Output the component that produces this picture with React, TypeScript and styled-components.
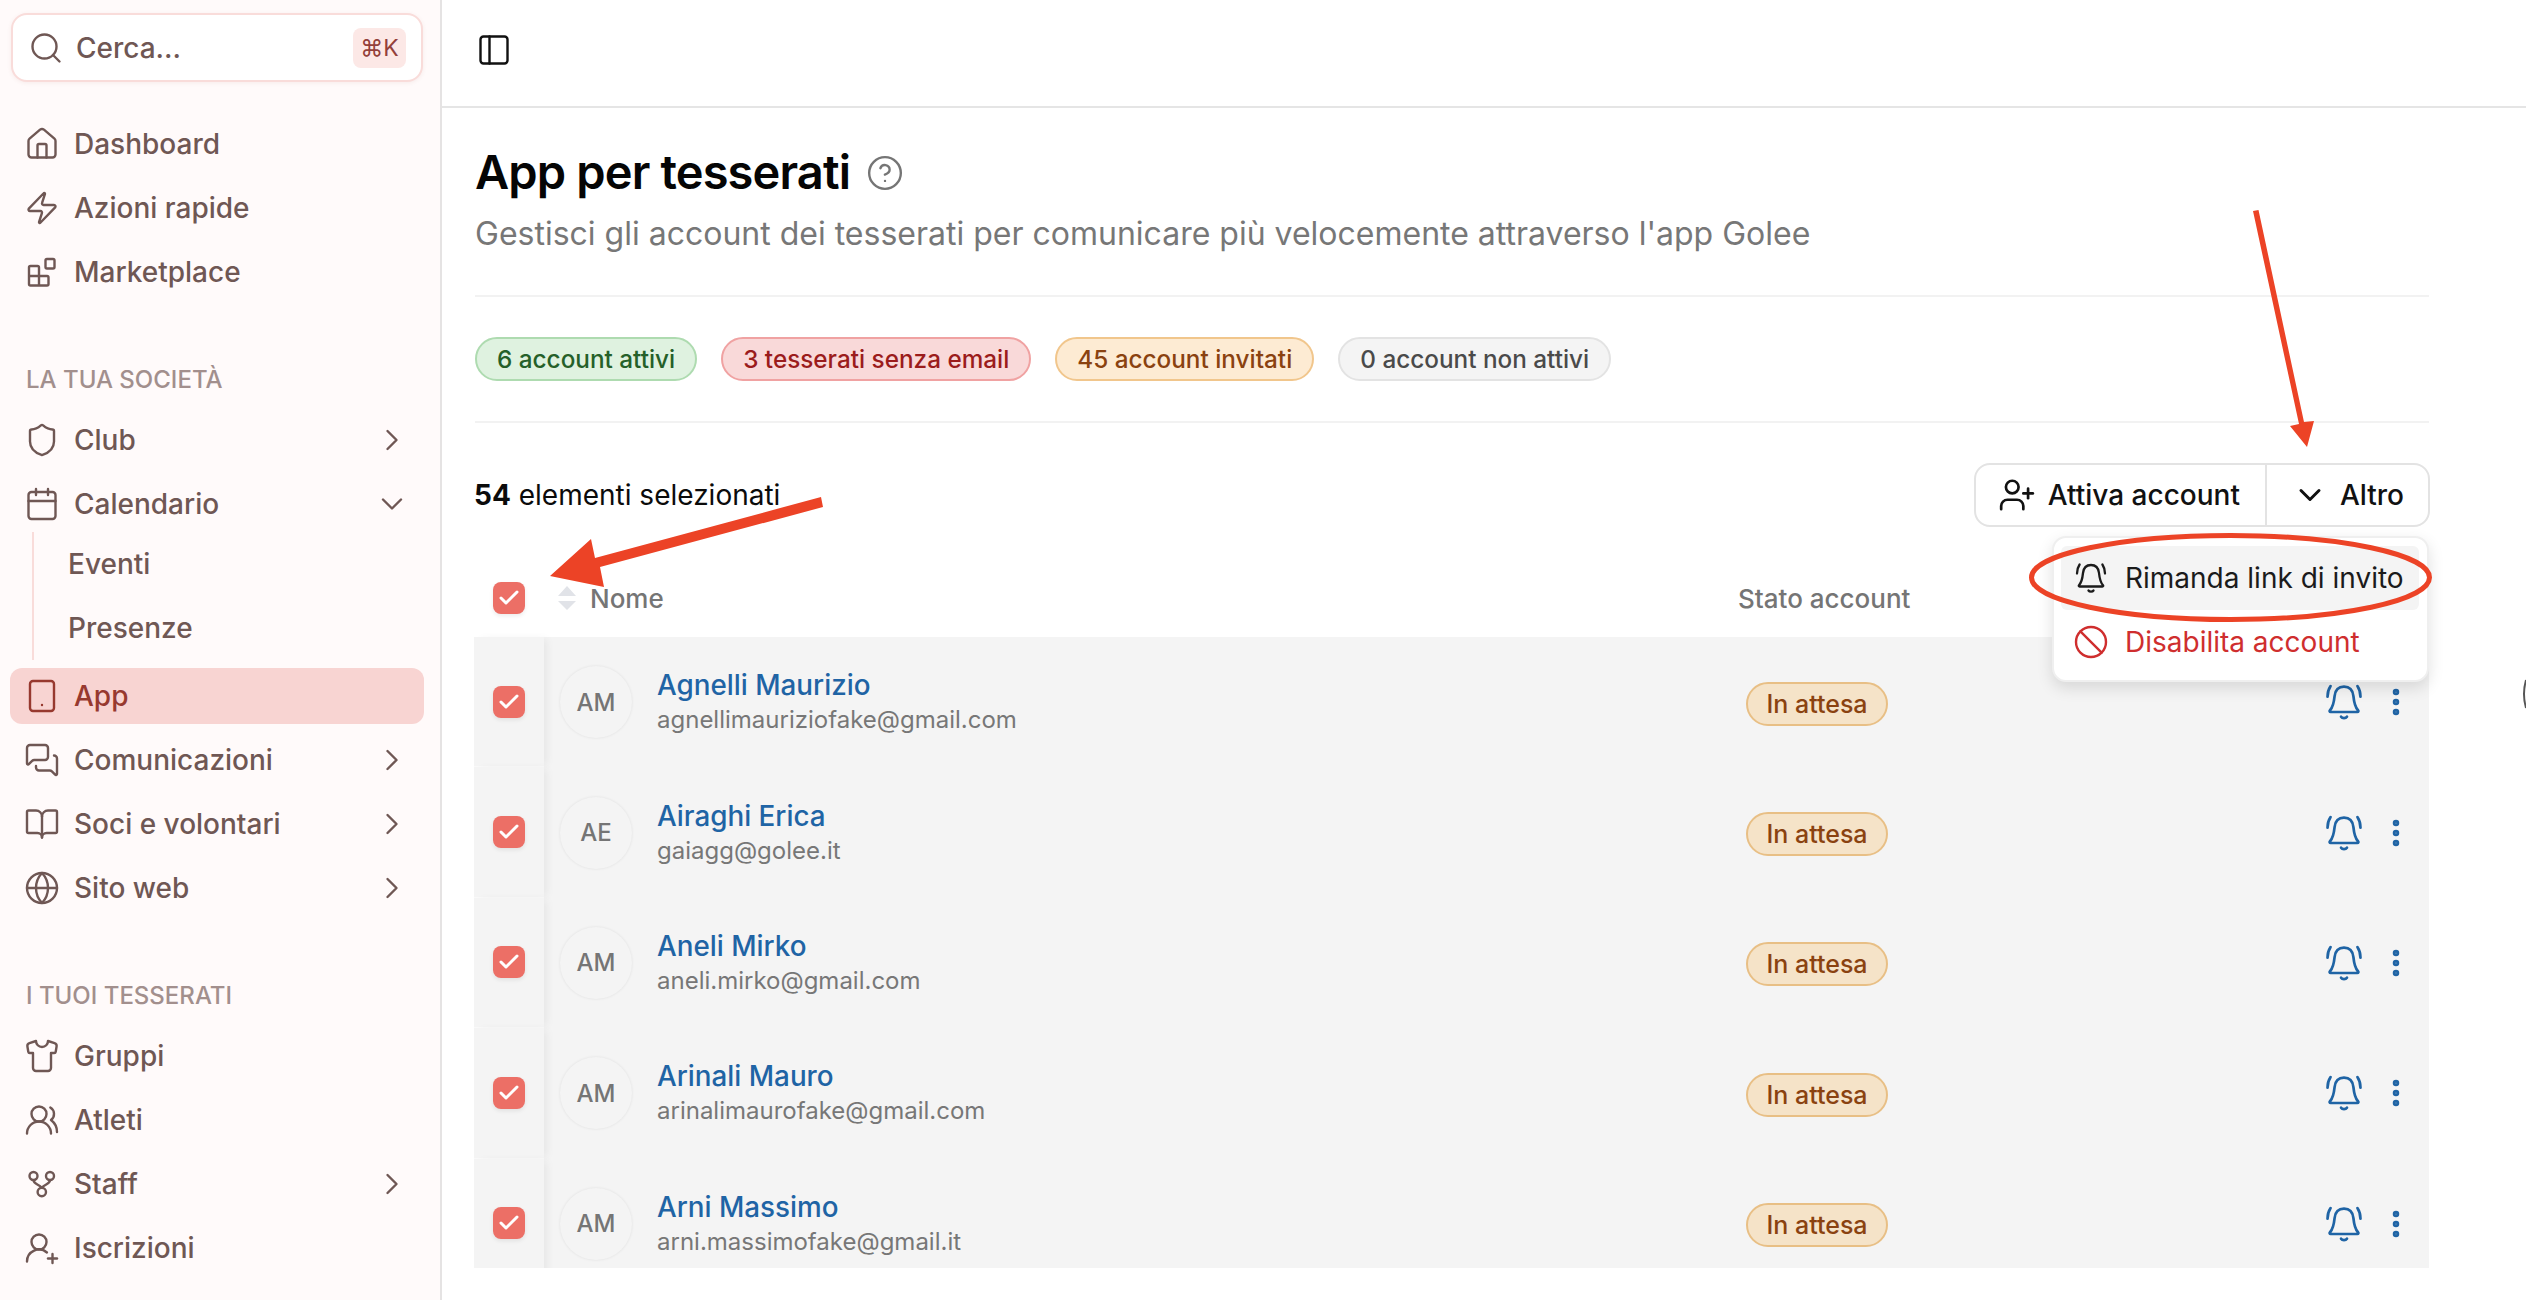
import React from "react";
import styled, { createGlobalStyle } from "styled-components";
import {
  Ban,
  BookOpen,
  Calendar,
  Check,
  ChevronDown,
  ChevronRight,
  CircleHelp,
  EllipsisVertical,
  Globe,
  House,
  LucideIcon,
  MessagesSquare,
  PanelLeft,
  Search,
  Shield,
  Shirt,
  Tablet,
  UserPlus,
  UserRoundPlus,
  UsersRound,
  Zap,
} from "lucide-react";

const GlobalStyle = createGlobalStyle`
  html, body {
    margin: 0;
    padding: 0;
    background: #fff;
    font-family: Inter, "Liberation Sans", sans-serif;
    overflow: hidden;
  }
  * { box-sizing: border-box; }
`;

const Page = styled.div`
  position: relative;
  display: flex;
  width: 2526px;
  height: 1300px;
  overflow: hidden;
`;

/* sidebar */
const Sidebar = styled.aside`
  flex: 0 0 442px;
  height: 100%;
  padding: 13px 16px 0 10px;
  background: #fffafa;
  border-right: 2px solid #e5e3e3;
  color: #6f5754;
`;

const SearchBox = styled.div`
  display: flex;
  align-items: center;
  height: 69px;
  margin: 0 0 34px 1px;
  width: 412px;
  padding: 0 15px 0 15px;
  gap: 12px;
  background: #fff;
  border: 2px solid #f9dcda;
  border-radius: 16px;
  box-shadow: 0 1px 4px rgba(150, 60, 50, 0.08);
  font-size: 28px;
  font-weight: 500;
`;

const SearchLabel = styled.span`
  flex: 1;
`;

const Kbd = styled.span`
  display: flex;
  align-items: center;
  justify-content: center;
  width: 53px;
  height: 40px;
  border-radius: 8px;
  background: #fce8e6;
  color: #93403a;
  font-size: 23px;
  font-weight: 400;
`;

const NavList = styled.nav`
  display: flex;
  flex-direction: column;
  gap: 8px;
`;

const NavRow = styled.div<{ $active?: boolean }>`
  display: flex;
  align-items: center;
  height: 56px;
  padding: 0 14px;
  gap: 14px;
  border-radius: 12px;
  font-size: 28px;
  font-weight: 500;
  background: ${(p) => (p.$active ? "#f8d4d2" : "transparent")};
  color: ${(p) => (p.$active ? "#97392f" : "#6f5754")};
`;

const NavText = styled.span`
  flex: 1;
`;

const SectionLabel = styled.div`
  height: 32px;
  margin: 56px 0 8px;
  padding-left: 16px;
  line-height: 32px;
  font-size: 24px;
  font-weight: 500;
  color: #a28f8d;
`;

const SubNav = styled.div`
  display: flex;
  flex-direction: column;
  gap: 8px;
  margin: -8px 0 0 22px;
  padding: 4px 0 4px 34px;
  border-left: 2px solid #f9dcda;
`;

const SubRow = styled.div`
  display: flex;
  align-items: center;
  height: 56px;
  font-size: 28px;
  font-weight: 500;
  color: #6f5754;
`;

/* main */
const Main = styled.main`
  flex: 1;
  min-width: 0;
  display: flex;
  flex-direction: column;
`;

const TopBar = styled.header`
  display: flex;
  align-items: center;
  flex: 0 0 108px;
  padding: 0 0 6px 34px;
  border-bottom: 2px solid #e5e5e5;
  color: #111;
`;

const Content = styled.div`
  padding: 36px 97px 0 33px;
`;

const TitleRow = styled.div`
  display: flex;
  align-items: center;
  gap: 16px;
  height: 56px;
`;

const Title = styled.h1`
  margin: 0;
  font-size: 47px;
  line-height: 56px;
  font-weight: 600;
  letter-spacing: -0.86px;
  color: #050505;
`;

const HelpIcon = styled.span`
  display: flex;
  color: #757575;
  margin-top: 2px;
`;

const Subtitle = styled.p`
  margin: 12px 0 0;
  font-size: 32px;
  line-height: 44px;
  font-weight: 400;
  color: #777;
`;

const Divider = styled.div`
  height: 2px;
  background: #f2f2f2;
`;

const TopDivider = styled(Divider)`
  margin-top: 39px;
`;

const ChipRow = styled.div`
  display: flex;
  gap: 24px;
  margin: 40px 0;
`;

const tones = {
  green: { bg: "#dff2e0", line: "#aedbb0", fg: "#256029" },
  red: { bg: "#f9d9d9", line: "#f0a2a2", fg: "#9b1c1c" },
  orange: { bg: "#fdebd3", line: "#f1c68c", fg: "#8a4210" },
  grey: { bg: "#f4f4f4", line: "#e3e3e3", fg: "#4a4a4a" },
};

const Chip = styled.span<{ $tone: keyof typeof tones }>`
  display: flex;
  align-items: center;
  height: 44px;
  padding: 0 20px;
  border-radius: 22px;
  font-size: 24.3px;
  font-weight: 500;
  white-space: nowrap;
  background: ${(p) => tones[p.$tone].bg};
  border: 2px solid ${(p) => tones[p.$tone].line};
  color: ${(p) => tones[p.$tone].fg};
`;

const Toolbar = styled.div`
  display: flex;
  justify-content: space-between;
  align-items: center;
  margin-top: 40px;
  height: 64px;
`;

const Selection = styled.div`
  font-size: 28px;
  margin-left: -1px;
  color: #0b0b0b;
  b {
    font-weight: 700;
  }
`;

const ButtonGroup = styled.div`
  position: relative;
  display: flex;
  height: 64px;
  margin-right: -1px;
  border: 2px solid #e3e3e3;
  border-radius: 16px;
  background: #fff;
`;

const GroupButton = styled.div<{ $split?: boolean }>`
  display: flex;
  align-items: center;
  gap: 12px;
  padding: ${(p) => (p.$split ? "0 24px 0 25px" : "0 25px 0 22px")};
  font-size: 28px;
  font-weight: 500;
  color: #111;
  & + & {
    border-left: 2px solid #e3e3e3;
  }
`;

const Menu = styled.div`
  position: absolute;
  z-index: 2;
  top: 71px;
  right: -1px;
  width: 377px;
  height: 146px;
  padding: 8px 8px 8px 7px;
  background: #fff;
  border: 2px solid #efefef;
  border-radius: 14px;
  box-shadow: 0 6px 16px rgba(0, 0, 0, 0.12);
`;

const MenuItem = styled.div<{ $danger?: boolean; $hover?: boolean }>`
  display: flex;
  align-items: center;
  gap: 16px;
  height: 64px;
  padding-left: 12px;
  border-radius: 6px;
  font-size: 28px;
  font-weight: 400;
  color: ${(p) => (p.$danger ? "#cf2e2e" : "#1b1b1b")};
  background: ${(p) => (p.$hover ? "#f4f4f4" : "transparent")};
`;

const MenuBell = styled.span`
  display: flex;
  margin: 0 1px;
`;

const Table = styled.div`
  height: 741px;
  overflow: hidden;
  margin-left: -1px;
`;

const columns = "70px 1194px 1fr auto";

const HeadRow = styled.div`
  display: grid;
  grid-template-columns: ${columns};
  align-items: center;
  height: 110px;
  padding-top: 32px;
  font-size: 26px;
  font-weight: 500;
  color: #757575;
`;

const HeadName = styled.div`
  display: flex;
  align-items: center;
  gap: 14px;
  padding-left: 14px;
`;

const BodyRow = styled.div`
  display: grid;
  grid-template-columns: ${columns};
  align-items: center;
  height: 130.4px;
  background: #f4f4f4;
`;

const CheckCell = styled.div<{ $sticky?: boolean }>`
  display: flex;
  align-items: center;
  justify-content: center;
  height: 100%;
  ${(p) =>
    p.$sticky
      ? "box-shadow: 5px 0 8px -2px rgba(0, 0, 0, 0.06); border-bottom: 1px solid #f9f9f9; background: #f4f4f4;"
      : ""}
`;

const Checkbox = styled.span`
  display: flex;
  align-items: center;
  justify-content: center;
  width: 32px;
  height: 32px;
  border-radius: 8px;
  background: #ec6f66;
  color: #fff;
  box-shadow: 0 2px 4px rgba(0, 0, 0, 0.08);
`;

const Person = styled.div`
  display: flex;
  align-items: center;
  gap: 25px;
  padding-left: 16px;
`;

const Avatar = styled.div`
  display: flex;
  align-items: center;
  justify-content: center;
  width: 72px;
  height: 72px;
  border-radius: 50%;
  background: #f4f4f4;
  box-shadow: 0 0 3px rgba(0, 0, 0, 0.09);
  font-size: 24px;
  font-weight: 500;
  color: #757575;
`;

const PersonText = styled.div`
  display: flex;
  flex-direction: column;
`;

const PersonName = styled.div`
  font-size: 27.8px;
  line-height: 34px;
  margin-top: 1px;
  font-weight: 500;
  color: #1f64a5;
`;

const PersonMail = styled.div`
  font-size: 24px;
  line-height: 34px;
  margin-top: 1px;
  color: #777;
`;

const StatusChip = styled.span`
  display: inline-flex;
  align-items: center;
  justify-content: center;
  width: 142px;
  height: 44px;
  margin: 3px 0 0 8px;
  border-radius: 22px;
  background: #f5e3c8;
  border: 2px solid #e8bf85;
  color: #8a4210;
  font-size: 25px;
  font-weight: 500;
`;

const RowActions = styled.div`
  display: flex;
  align-items: center;
  gap: 15px;
  padding-right: 16px;
  color: #1f64a5;
`;

const Annotations = styled.svg`
  position: absolute;
  z-index: 5;
  left: 0;
  top: 0;
  pointer-events: none;
`;

const Icon = ({ of: Glyph, size = 36 }: { of: LucideIcon; size?: number }) => (
  <Glyph size={size} strokeWidth={1.6} style={{ flex: "none" }} />
);

const StaffIcon = () => (
  <svg width="36" height="36" viewBox="0 0 36 36" fill="none" stroke="currentColor" strokeWidth="2.4" style={{ flex: "none" }}>
    <circle cx="9.5" cy="10" r="4" />
    <circle cx="26" cy="10" r="4" />
    <circle cx="17.8" cy="26" r="4.2" />
    <path d="M9.5 14c0 4 5 4 8.3 7.8M26 14c0 4-5 4-8.2 7.8" />
  </svg>
);

const MarketIcon = () => (
  <svg width="36" height="36" viewBox="0 0 36 36" fill="none" stroke="currentColor" strokeWidth="2.4" strokeLinejoin="round" style={{ flex: "none" }}>
    <rect x="21.500" y="5" width="9" height="9.500" rx="1.500" />
    <path d="M5 13.500a1.500 1.500 0 0 1 1.500-1.500h7a1.500 1.500 0 0 1 1.500 1.500V22h8a1.500 1.500 0 0 1 1.500 1.500v6.500a1.500 1.500 0 0 1-1.500 1.500h-16.500a1.500 1.500 0 0 1-1.500-1.500zM5 22h10v9.500" />
  </svg>
);

const BellIcon = ({ size }: { size: number }) => (
  <svg width={size} height={size} viewBox="0 0 34 34" fill="none" stroke="currentColor" strokeWidth="2.3" strokeLinecap="round" strokeLinejoin="round" style={{ flex: "none" }}>
    <path d="M17 4c-5 0-7.500 3.500-8 8-.5 5-1 9-4 12.200-.5.6-.2 1.300.6 1.300h22.800c.8 0 1.100-.7.6-1.300-3-3.200-3.500-7.200-4-12.200-.5-4.500-3-8-8-8z" />
    <path d="M14.500 29.500c1 1.500 4 1.500 5 0" />
    <path d="M3 12.500c0-3.300.8-6.300 2.600-9M31 12.500c0-3.300-.8-6.300-2.600-9" />
  </svg>
);

const SortIcon = () => (
  <svg width="18" height="24" viewBox="0 0 18 24" fill="#e1e3e8" style={{ flex: "none" }}>
    <path d="M9 0l9 10H0zM9 24L0 15h18z" />
  </svg>
);

type NavEntry = { icon: React.ReactNode; label: string; arrow?: boolean };

const Entry = ({ icon, label, arrow }: NavEntry) => (
  <NavRow>
    {icon}
    <NavText>{label}</NavText>
    {arrow && <Icon of={ChevronRight} />}
  </NavRow>
);

const people = [
  { initials: "AM", name: "Agnelli Maurizio", mail: "agnellimauriziofake@gmail.com" },
  { initials: "AE", name: "Airaghi Erica", mail: "gaiagg@golee.it" },
  { initials: "AM", name: "Aneli Mirko", mail: "aneli.mirko@gmail.com" },
  { initials: "AM", name: "Arinali Mauro", mail: "arinalimaurofake@gmail.com" },
  { initials: "AM", name: "Arni Massimo", mail: "arni.massimofake@gmail.it" },
];

export default function App() {
  return (
    <Page>
      <GlobalStyle />
      <Sidebar>
        <SearchBox>
          <Icon of={Search} />
          <SearchLabel>Cerca...</SearchLabel>
          <Kbd>⌘K</Kbd>
        </SearchBox>

        <NavList>
          <Entry icon={<Icon of={House} />} label="Dashboard" />
          <Entry icon={<Icon of={Zap} />} label="Azioni rapide" />
          <Entry icon={<MarketIcon />} label="Marketplace" />
          <SectionLabel>LA TUA SOCIETÀ</SectionLabel>
          <Entry icon={<Icon of={Shield} />} label="Club" arrow />
          <NavRow>
            <Icon of={Calendar} />
            <NavText>Calendario</NavText>
            <Icon of={ChevronDown} />
          </NavRow>
          <SubNav>
            <SubRow>Eventi</SubRow>
            <SubRow>Presenze</SubRow>
          </SubNav>
          <NavRow $active>
            <Icon of={Tablet} />
            <NavText>App</NavText>
          </NavRow>
          <Entry icon={<Icon of={MessagesSquare} />} label="Comunicazioni" arrow />
          <Entry icon={<Icon of={BookOpen} />} label="Soci e volontari" arrow />
          <Entry icon={<Icon of={Globe} />} label="Sito web" arrow />
          <SectionLabel>I TUOI TESSERATI</SectionLabel>
          <Entry icon={<Icon of={Shirt} />} label="Gruppi" />
          <Entry icon={<Icon of={UsersRound} />} label="Atleti" />
          <Entry icon={<StaffIcon />} label="Staff" arrow />
          <Entry icon={<Icon of={UserRoundPlus} />} label="Iscrizioni" />
        </NavList>
      </Sidebar>

      <Main>
        <TopBar>
          <Icon of={PanelLeft} />
        </TopBar>
        <Content>
          <TitleRow>
            <Title>App per tesserati</Title>
            <HelpIcon>
              <CircleHelp size={38} strokeWidth={1.5} />
            </HelpIcon>
          </TitleRow>
          <Subtitle>
            Gestisci gli account dei tesserati per comunicare più velocemente attraverso l'app Golee
          </Subtitle>
          <TopDivider />
          <ChipRow>
            <Chip $tone="green">6 account attivi</Chip>
            <Chip $tone="red">3 tesserati senza email</Chip>
            <Chip $tone="orange">45 account invitati</Chip>
            <Chip $tone="grey">0 account non attivi</Chip>
          </ChipRow>
          <Divider />
          <Toolbar>
            <Selection>
              <b>54</b> elementi selezionati
            </Selection>
            <ButtonGroup>
              <GroupButton>
                <UserPlus size={38} strokeWidth={1.7} />
                Attiva account
              </GroupButton>
              <GroupButton $split>
                <ChevronDown size={36} strokeWidth={2} />
                Altro
              </GroupButton>
              <Menu>
                <MenuItem $hover>
                  <MenuBell>
                    <BellIcon size={34} />
                  </MenuBell>
                  Rimanda link di invito
                </MenuItem>
                <MenuItem $danger>
                  <Ban size={36} strokeWidth={1.6} />
                  Disabilita account
                </MenuItem>
              </Menu>
            </ButtonGroup>
          </Toolbar>
          <Table>
            <HeadRow>
              <CheckCell>
                <Checkbox>
                  <Check size={24} strokeWidth={3} />
                </Checkbox>
              </CheckCell>
              <HeadName>
                <SortIcon />
                Nome
              </HeadName>
              <div>Stato account</div>
            </HeadRow>
            {people.map((person) => (
              <BodyRow key={person.mail}>
                <CheckCell $sticky>
                  <Checkbox>
                    <Check size={24} strokeWidth={3} />
                  </Checkbox>
                </CheckCell>
                <Person>
                  <Avatar>{person.initials}</Avatar>
                  <PersonText>
                    <PersonName>{person.name}</PersonName>
                    <PersonMail>{person.mail}</PersonMail>
                  </PersonText>
                </Person>
                <div>
                  <StatusChip>In attesa</StatusChip>
                </div>
                <RowActions>
                  <BellIcon size={40} />
                  <EllipsisVertical size={34} strokeWidth={2.6} />
                </RowActions>
              </BodyRow>
            ))}
          </Table>
        </Content>
      </Main>

      <Annotations width="2526" height="1300" viewBox="0 0 2526 1300">
        <path
          d="M821 497L823 507 600 567 604 587 550 576 591 539 595 558Z"
          fill="#ec4326"
        />
        <path
          d="M2253 211L2258.500 210 2304 422 2314 421 2307 447 2290 426 2299 424Z"
          fill="#ec4326"
        />
        <ellipse cx="2230.500" cy="577.500" rx="199" ry="42" fill="none" stroke="#ec4326" strokeWidth="5" />
        <path d="M2526 680Q2522 694 2526 708" fill="none" stroke="#555" strokeWidth="2" />
      </Annotations>
    </Page>
  );
}
